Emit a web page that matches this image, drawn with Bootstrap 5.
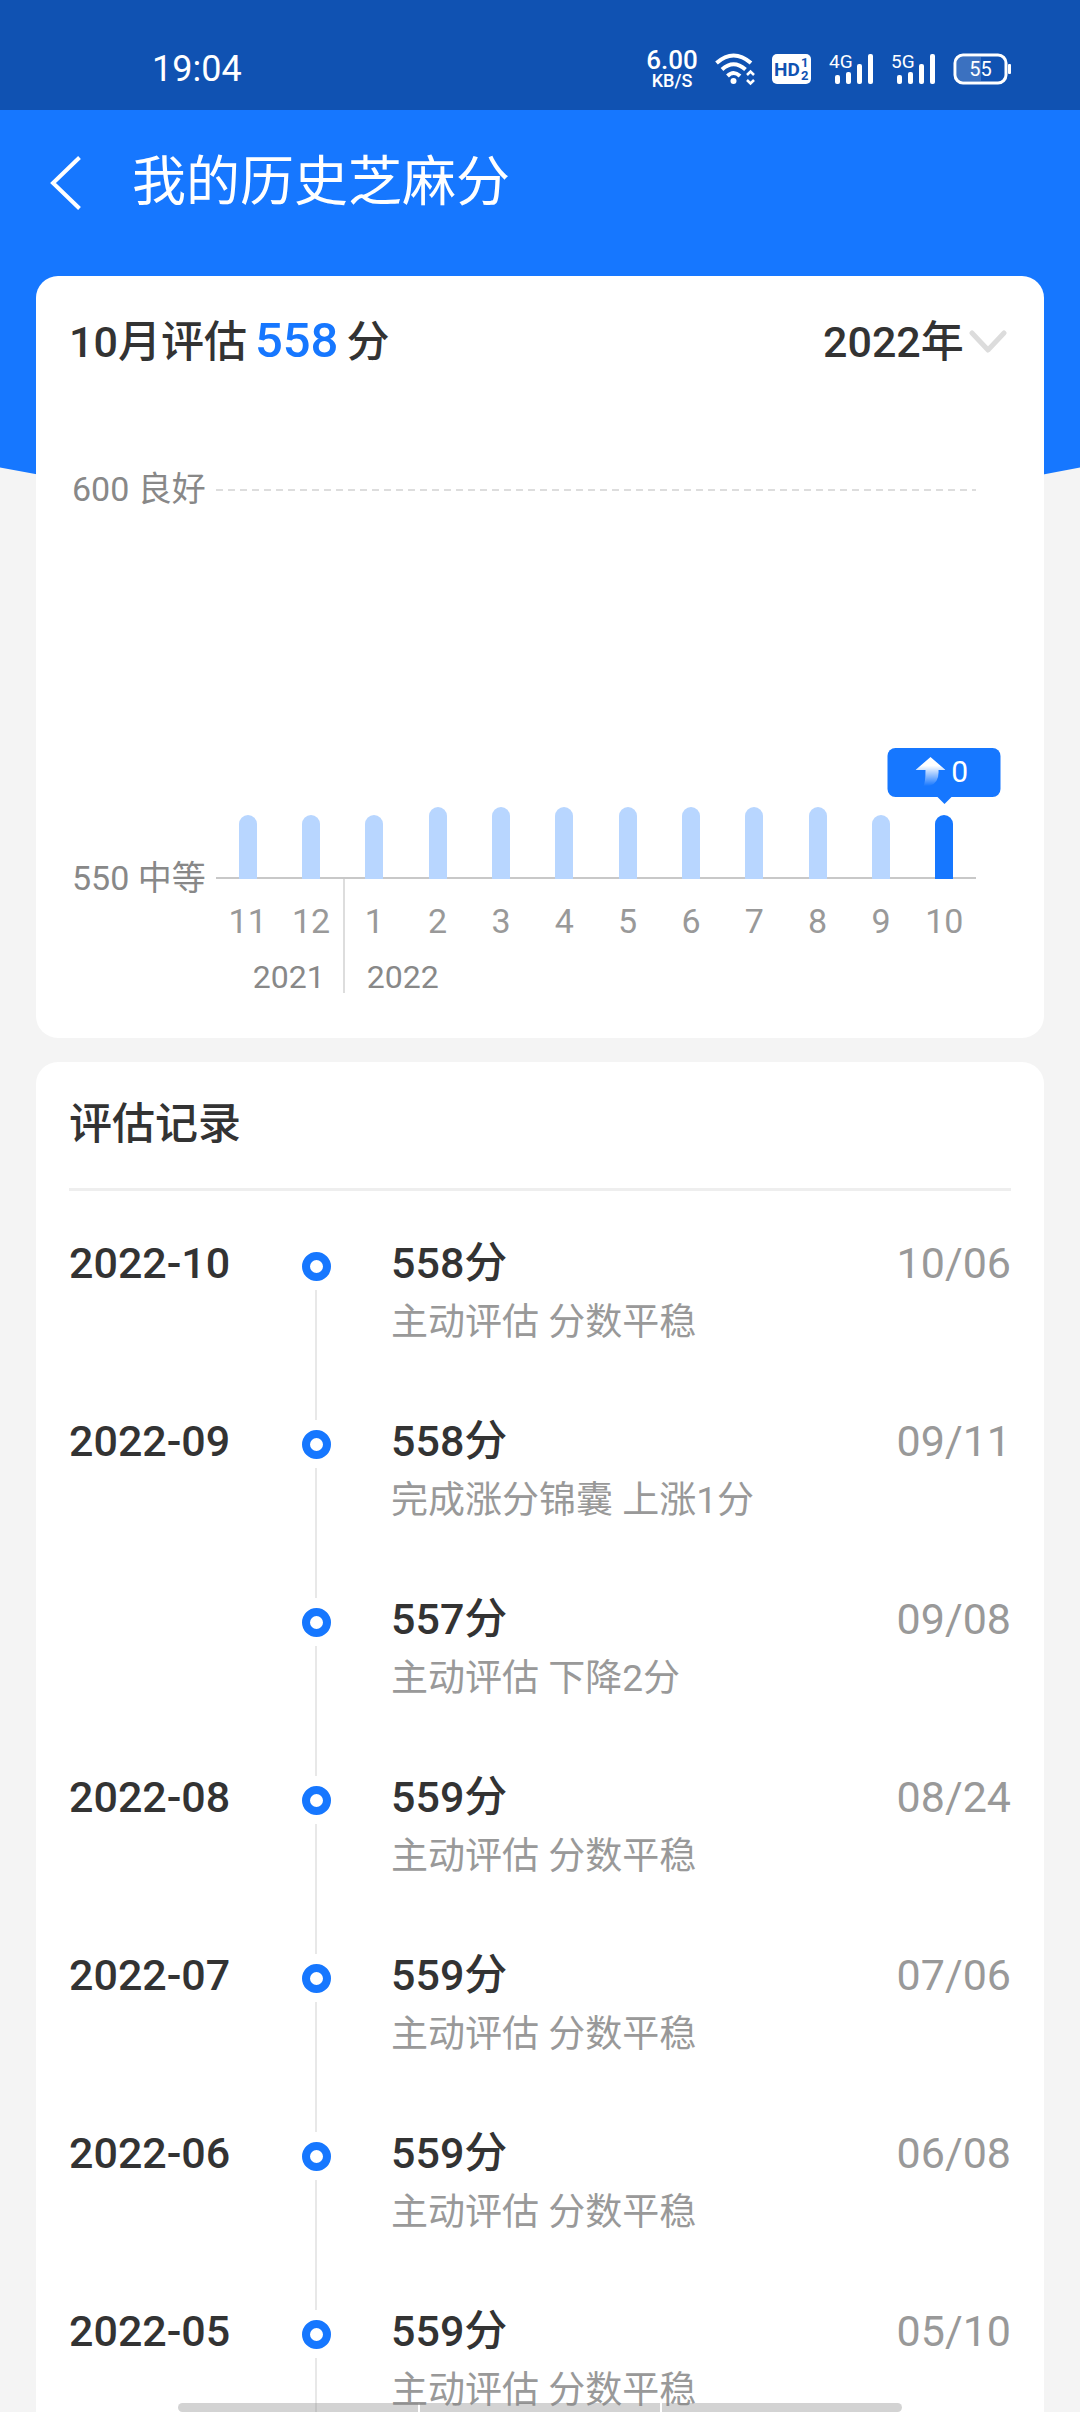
<!DOCTYPE html>
<html lang="zh-CN">
<head>
<meta charset="utf-8">
<meta name="viewport" content="width=device-width, initial-scale=1">
<title>我的历史芝麻分</title>
<link href="https://cdn.jsdelivr.net/npm/bootstrap@5.3.0/dist/css/bootstrap.min.css" rel="stylesheet">
<style>
:root{--brand:#1677ff;--ink:#333;--mute:#999;--axis:#888}
body{font-family:Roboto,"Noto Sans CJK SC",sans-serif;background:#f4f4f4;color:var(--ink);font-size:43px;line-height:60px}
.page{isolation:isolate}
.backdrop{position:absolute;inset:0 0 auto;height:540px;background:var(--brand);clip-path:circle(2800px at 50% -2280px);z-index:-1}
.status{height:110px;background:#1052b2;padding:28px 68px 0 152px;font-size:36px;line-height:36px}
.status .icons{gap:17px}
.status svg{overflow:visible}
.speed{font-size:26px;line-height:24px;font-weight:500;width:52px}
.speed div+div{font-size:18px;line-height:18px}
.appbar{height:166px;padding:0 50px 20px;gap:50px}
.appbar .back{line-height:0}
.appbar h1{font-size:54px;line-height:60px}
.content-area{padding:0 36px;gap:24px}
.panel{--bs-card-border-width:0;--bs-card-border-radius:22px;--bs-card-color:var(--ink);padding:36px 33px 0}
.panel h2{font-size:43px;line-height:60px;font-weight:500}
.score{color:var(--brand);font-size:49px;line-height:1}
.year-pick{font-size:43px;line-height:60px;font-weight:500;color:var(--ink);width:auto;border:0;padding:0 47px 0 0;background-color:transparent;background-position:right 4px center;background-size:38px 24px;
--bs-form-select-bg-img:url("data:image/svg+xml,%3csvg xmlns='http://www.w3.org/2000/svg' viewBox='0 0 38 24'%3e%3cpath d='M3 3l16 17L35 3' fill='none' stroke='%23dcdcdc' stroke-width='5' stroke-linecap='round' stroke-linejoin='round'/%3e%3c/svg%3e")}
.chart{padding:93px 35px 45px 3px;font-size:34px;line-height:48px;color:var(--axis)}
.axis-names{width:144px;height:437px}
.plot{height:390px;margin-top:24px;background:repeating-linear-gradient(90deg,#ddd 0 7px,transparent 7px 12px) top/100% 2px no-repeat;border-bottom:2px solid #c8c8c8}
.bar{width:18px;border-radius:9px 9px 0 0;background:#b8d6ff;margin-bottom:-2px}
.bar.now{background:var(--brand)}
.tip{position:absolute;bottom:80px;left:50%;transform:translateX(-50%);width:113px;height:49px;padding:0 5px 2px 0;border-radius:8px;background:var(--brand);color:#fff;font-size:30px;gap:6px}
.tip::after{content:"";position:absolute;top:49px;left:50%;margin-left:-7px;border:7px solid transparent;border-top-color:var(--brand);border-bottom:0}
.year-group{padding-top:18px;height:114px}
.year-group .months{color:var(--mute)}
.year-name{font-size:32px;line-height:36px;margin-top:14px}
.y-prev{flex:2 1 0;border-right:2px solid #ddd;margin-right:-2px}
.y-prev .year-name{padding-right:18px}
.y-cur{flex:10 1 0}
.panel .records-title{line-height:52px;padding-bottom:38px;border-bottom:3px solid #eee}
.record-list{padding-top:42px}
.record{min-height:178px}
.month-col{width:231px;font-weight:500}
.rail{width:32px;margin-right:59px;padding-top:19px;gap:9px}
.rail i{width:29px;height:29px;border:8px solid var(--brand);border-radius:50%}
.rail span{width:2px;background:#e8e8e8;margin-bottom:-9px}
.points{font-weight:500}
.note{font-size:37px;line-height:60px;color:var(--mute)}
.day{color:var(--mute)}
.homebar{position:fixed;left:178px;right:178px;bottom:0;height:9px;gap:2px}
.homebar span{background:rgba(130,130,130,.35);flex:1}
.homebar span:first-child{border-radius:8px 0 0 8px}
.homebar span:last-child{border-radius:0 8px 8px 0}
</style>
</head>
<body class="vh-100 overflow-hidden">
<div class="page position-relative">
<div class="backdrop"></div>
<div class="status d-flex justify-content-between align-items-center text-white">
  <div>19:04</div>
  <div class="icons d-flex align-items-center">
    <div class="speed text-center"><div>6.00</div><div>KB/S</div></div>
    <svg width="40" height="32" viewBox="0 0 40 32" fill="none" stroke="#fff" stroke-width="4"><path d="M1.500 10Q18.500-5 36 10M7 16.500Q18.500 6 30.500 16.500M12.500 23Q18.500 17 25 23"/><circle cx="18.500" cy="28" r="3" fill="#fff" stroke="none"/><path d="M32 22l3.500-3.500L39 22M32 27l3.500 3.500L39 27" stroke-width="2.500"/></svg>
    <svg width="40" height="30" viewBox="0 0 40 30"><rect width="39" height="30" rx="5" fill="#fff"/><g fill="#1052b2" font-family="Roboto" font-weight="700"><text x="2" y="22" font-size="19">HD</text><text x="29" y="13" font-size="13">1</text><text x="29" y="26" font-size="13">2</text></g></svg>
    <svg width="45" height="32" viewBox="0 0 45 32" fill="#fff"><text x="0" y="15" font-size="19" font-family="Roboto">4G</text><rect x="6" y="22" width="5" height="9" rx="2"/><rect x="17" y="19" width="5" height="12" rx="2"/><rect x="28" y="11" width="5" height="20" rx="2"/><rect x="39" y="1" width="5" height="30" rx="2"/></svg>
    <svg width="45" height="32" viewBox="0 0 45 32" fill="#fff"><text x="0" y="15" font-size="19" font-family="Roboto">5G</text><rect x="6" y="22" width="5" height="9" rx="2"/><rect x="17" y="19" width="5" height="12" rx="2"/><rect x="28" y="11" width="5" height="20" rx="2"/><rect x="39" y="1" width="5" height="30" rx="2"/></svg>
    <svg width="59" height="32" viewBox="0 0 59 32"><rect x="2" y="2" width="51" height="28" rx="8" fill="none" stroke="#fff" stroke-width="3"/><path d="M4 6q1-2 4-2h20v24H8q-4 0-4-4z" fill="#fff" opacity=".18"/><rect x="55" y="11" width="3" height="10" rx="1" fill="#fff"/><text x="27.500" y="23" font-size="20" font-family="Roboto" fill="#fff" text-anchor="middle">55</text></svg>
  </div>
</div>
<header class="appbar d-flex align-items-center text-white">
  <a class="back" href="#" aria-label="返回"><svg width="32" height="54" viewBox="0 0 32 54" fill="none" stroke="#fff" stroke-width="4"><path d="M29.500 1.500L3 27l26.500 25.500"/></svg></a>
  <h1 class="m-0 fw-normal">我的历史芝麻分</h1>
</header>
<main class="content-area d-flex flex-column">
  <section class="card panel">
    <div class="d-flex justify-content-between align-items-center">
      <h2 class="m-0">10月评估<span class="score mx-2">558</span>分</h2>
      <select class="form-select year-pick" aria-label="年份"><option>2022年</option></select>
    </div>
    <div class="chart d-flex">
      <div class="axis-names d-flex flex-column justify-content-between flex-shrink-0"><span>600 良好</span><span>550 中等</span></div>
      <div class="flex-grow-1">
        <div class="plot d-flex align-items-end" id="plot"></div>
        <div class="d-flex">
          <div class="year-group y-prev"><div class="months d-flex text-center"><span class="col">11</span><span class="col">12</span></div><div class="year-name text-end">2021</div></div>
          <div class="year-group y-cur"><div class="months d-flex text-center"><span class="col">1</span><span class="col">2</span><span class="col">3</span><span class="col">4</span><span class="col">5</span><span class="col">6</span><span class="col">7</span><span class="col">8</span><span class="col">9</span><span class="col">10</span></div><div class="year-name ps-4">2022</div></div>
        </div>
      </div>
    </div>
  </section>
  <section class="card panel">
    <h2 class="records-title m-0">评估记录</h2>
    <div id="records" class="record-list"></div>
  </section>
</main>
</div>
<div class="homebar d-flex"><span></span><span></span><span></span></div>
<script src="https://cdn.jsdelivr.net/npm/bootstrap@5.3.0/dist/js/bootstrap.bundle.min.js"></script>
<script>
const scores=[558,558,558,559,559,559,559,559,559,559,558,558];
document.getElementById('plot').innerHTML=scores.map((s,i)=>{
  const now=i===scores.length-1;
  const tip=now?'<div class="tip d-flex align-items-center justify-content-center"><svg width="30" height="30" viewBox="0 0 30 30"><defs><linearGradient id="fade" x2="0" y2="1"><stop offset=".3" stop-color="#fff"/><stop offset="1" stop-color="#fff" stop-opacity="0"/></linearGradient></defs><path d="M15 0l15 13h-7q1 13-9 16H8q2-4 2-16H0z" fill="url(#fade)"/></svg>0</div>':'';
  return `<div class="col position-relative h-100 d-flex align-items-end justify-content-center"><div class="bar${now?' now':''}" style="height:${(s-550)*8}px"></div>${tip}</div>`;
}).join('');
const records=[
 ['2022-10','558分','主动评估 分数平稳','10/06'],
 ['2022-09','558分','完成涨分锦囊 上涨1分','09/11'],
 ['','557分','主动评估 下降2分','09/08'],
 ['2022-08','559分','主动评估 分数平稳','08/24'],
 ['2022-07','559分','主动评估 分数平稳','07/06'],
 ['2022-06','559分','主动评估 分数平稳','06/08'],
 ['2022-05','559分','主动评估 分数平稳','05/10']];
document.getElementById('records').innerHTML=records.map(([m,p,n,d])=>`<div class="record d-flex">
<div class="month-col">${m}</div><div class="rail d-flex flex-column align-items-center"><i class="flex-shrink-0"></i><span class="flex-grow-1"></span></div>
<div class="flex-grow-1"><div class="points">${p}</div><div class="note">${n}</div></div><div class="day">${d}</div></div>`).join('');
</script>
</body>
</html>
